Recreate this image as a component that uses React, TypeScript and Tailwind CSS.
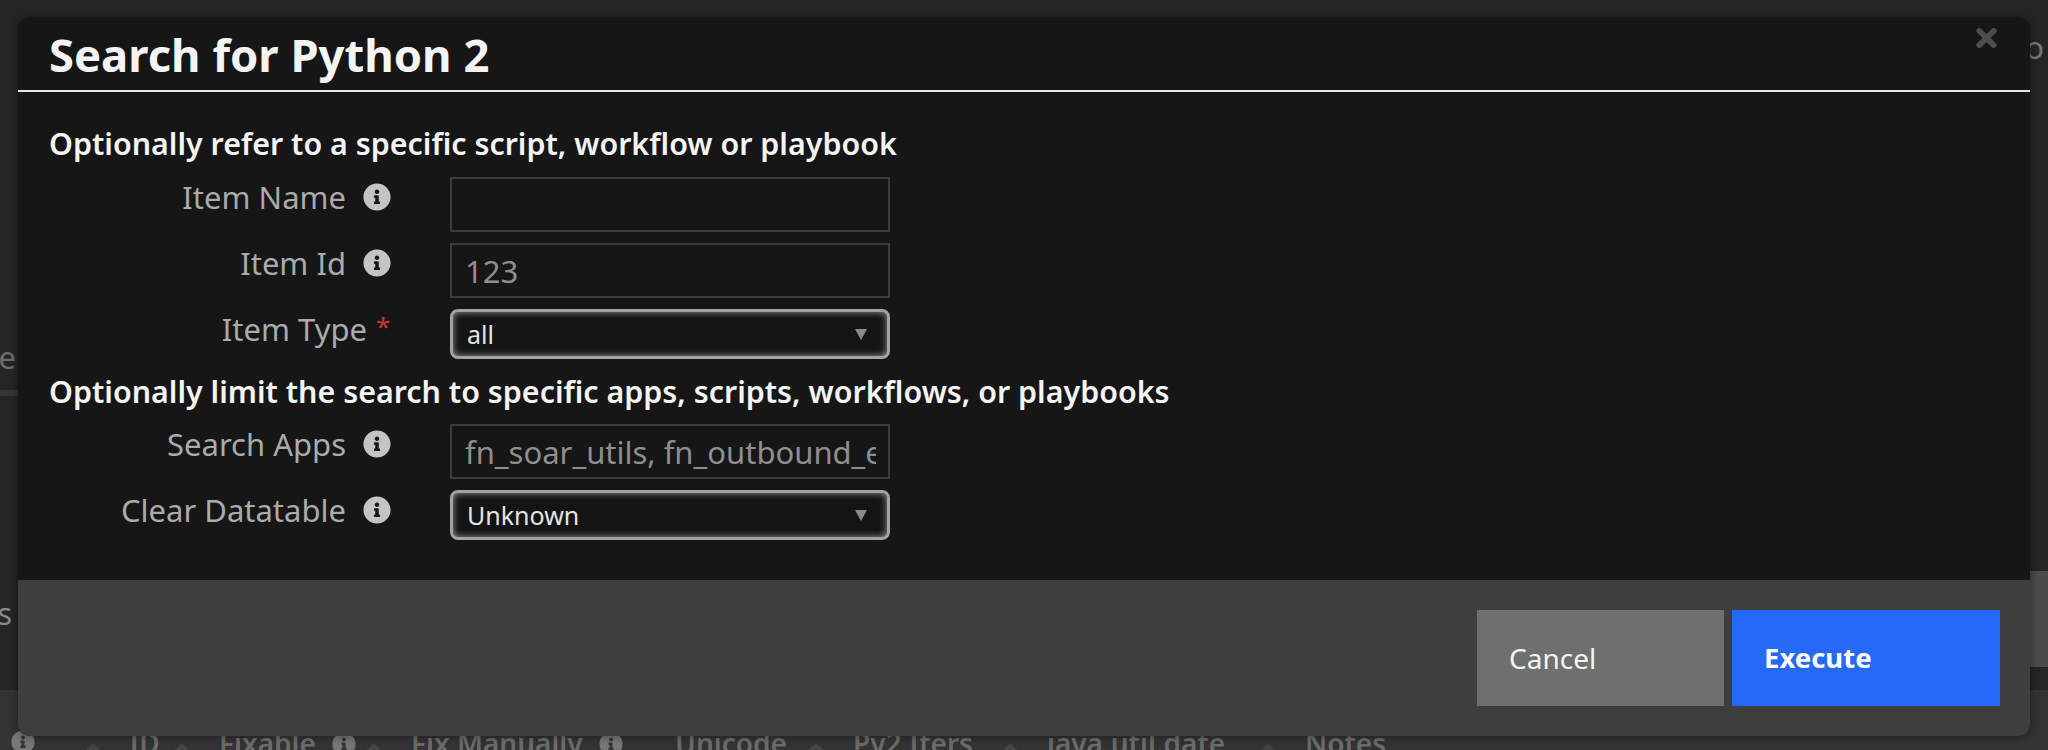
import { FaInfoCircle, FaTimes } from "react-icons/fa";

const font = "font-['Noto_Sans','Liberation_Sans',sans-serif]";

const columns = [
  { label: "ID", width: "w-[90px]", info: false, sort: true },
  { label: "Fixable", width: "w-[192px]", info: true, sort: true },
  { label: "Fix Manually", width: "w-[264px]", info: true, sort: false },
  { label: "Unicode", width: "w-[178px]", info: false, sort: true },
  { label: "Py2 Iters", width: "w-[194px]", info: false, sort: true },
  { label: "java.util.date", width: "w-[258px]", info: false, sort: true },
  { label: "Notes", width: "w-[100px]", info: false, sort: false },
];

const SortArrow = () => (
  <span className="mt-[15px] w-0 h-0 border-x-[10px] border-x-transparent border-b-[10px] border-b-[#444444]" />
);

const Label = ({ text, info, required }: { text: string; info?: boolean; required?: boolean }) => (
  <div className="flex w-[401px] shrink-0 justify-end pr-[59px] -mt-[1px]">
    <span className="text-[31px] leading-[42px] text-[#ababab]">{text}</span>
    {required ? (
      <span className="w-[15px] ml-[9px] text-[26px] leading-[36px] text-[#c93a34]">*</span>
    ) : null}
    {info ? (
      <span className="ml-[17px] flex h-[42px] items-center">
        <FaInfoCircle className="w-[28px] h-[28px] shrink-0 text-[#c4c4c4]" />
      </span>
    ) : null}
  </div>
);

const TextField = ({ value }: { value: string }) => (
  <input
    readOnly
    value={value}
    className="w-[440px] h-[55px] border-2 border-[#3c3c3c] bg-transparent pl-[13px] pr-[12px] text-[31px] text-[#8f8f8f] outline-none"
  />
);

const SelectField = ({ value }: { value: string }) => (
  <div className="relative w-[440px] h-[50px] rounded-[8px] border-[3px] border-[#a3a3a3] bg-[#141414] shadow-[inset_0_0_7px_#9a9a9a]">
    <select
      defaultValue={value}
      className="w-full h-full appearance-none bg-transparent pl-[14px] pt-[2px] text-[25px] text-[#e4e4e4] outline-none"
    >
      <option>{value}</option>
    </select>
    <span className="absolute right-[20px] top-[17px] w-0 h-0 border-x-[6px] border-x-transparent border-t-[11px] border-t-[#8a8a8a]" />
  </div>
);

const Heading = ({ children }: { children: string }) => (
  <h2 className="text-[30.4px] leading-[40px] font-semibold text-[#f4f4f4]">{children}</h2>
);

const App = () => {
  return (
    <div className={`relative flex flex-col w-[2048px] h-[750px] overflow-hidden bg-[#252525] ${font}`}>
      {/* page behind the dialog */}
      <div className="flex h-[690px] justify-between">
        <div className="flex w-[18px] flex-col items-end overflow-hidden pt-[336px]">
          <span className="pr-[2px] text-[31px] leading-[42px] text-[#6e6e6e]">e</span>
          <div className="mt-[12px] h-[6px] w-full shrink-0 bg-[#363636]" />
          <span className="mt-[196px] pr-[6px] text-[31px] leading-[42px] text-[#8a8a8a]">s</span>
        </div>
        <div className="flex w-[18px] flex-col items-end overflow-hidden pt-[26px]">
          <span className="pr-[4px] text-[31px] leading-[42px] text-[#777777]">o</span>
          <div className="mt-[503px] h-[96px] w-full shrink-0 bg-[#4a4a4a]" />
        </div>
      </div>
      <div className="flex h-[60px] items-start bg-[#333333] pl-[11px] pt-[38px] text-[#6c6c6c]">
        <FaInfoCircle className="mt-[2px] w-[24px] h-[24px] shrink-0 text-[#777777]" />
        <span className="ml-[48px] mr-[26px] flex">
          <SortArrow />
        </span>
        {columns.map((col) => (
          <div key={col.label} className={`flex shrink-0 justify-between pr-[27px] ${col.width}`}>
            <div className="flex">
              <span className="-mt-[1px] text-[28px] leading-[32px] font-semibold whitespace-nowrap">{col.label}</span>
              {col.info ? (
                <FaInfoCircle className="ml-[16px] mt-[4px] w-[24px] h-[24px] shrink-0 text-[#777777]" />
              ) : null}
            </div>
            {col.sort ? <SortArrow /> : null}
          </div>
        ))}
      </div>

      {/* dialog */}
      <div className="absolute left-[18px] top-[17px] flex h-[719px] w-[2012px] flex-col overflow-hidden rounded-[12px] bg-[#161616] shadow-[0_0_10px_rgba(0,0,0,0.45)]">
        <div className="flex h-[75px] shrink-0 items-start justify-between border-b-2 border-[#e8e8e8] pl-[31px] pr-[33px]">
          <h1 className="pt-[12px] text-[45.4px] leading-[50px] font-bold text-[#f4f4f4]">Search for Python 2</h1>
          <FaTimes className="mt-[6px] w-[21px] h-[30px] text-[#4d4d4d]" />
        </div>
        <div className="flex-1 pl-[31px] pt-[32px]">
          <Heading>Optionally refer to a specific script, workflow or playbook</Heading>
          <div className="mt-[13px] flex flex-col gap-[11px]">
            <div className="flex">
              <Label text="Item Name" info />
              <TextField value="" />
            </div>
            <div className="flex">
              <Label text="Item Id" info />
              <TextField value="123" />
            </div>
            <div className="flex">
              <Label text="Item Type" required />
              <SelectField value="all" />
            </div>
          </div>
          <div className="mt-[13px]">
            <Heading>Optionally limit the search to specific apps, scripts, workflows, or playbooks</Heading>
          </div>
          <div className="mt-[12px] flex flex-col gap-[11px]">
            <div className="flex">
              <Label text="Search Apps" info />
              <TextField value="fn_soar_utils, fn_outbound_email" />
            </div>
            <div className="flex">
              <Label text="Clear Datatable" info />
              <SelectField value="Unknown" />
            </div>
          </div>
        </div>
        <div className="flex h-[156px] shrink-0 items-start justify-end gap-[8px] bg-[#3e3e3e] pr-[30px] pt-[30px]">
          <button className="h-[96px] w-[247px] bg-[#6f6f6f] pl-[32px] text-left text-[28px] text-[#f4f4f4]">Cancel</button>
          <button className="h-[96px] w-[268px] bg-[#2769f7] pl-[32px] text-left text-[27.5px] font-bold text-white">Execute</button>
        </div>
      </div>
    </div>
  );
};

export default App;
